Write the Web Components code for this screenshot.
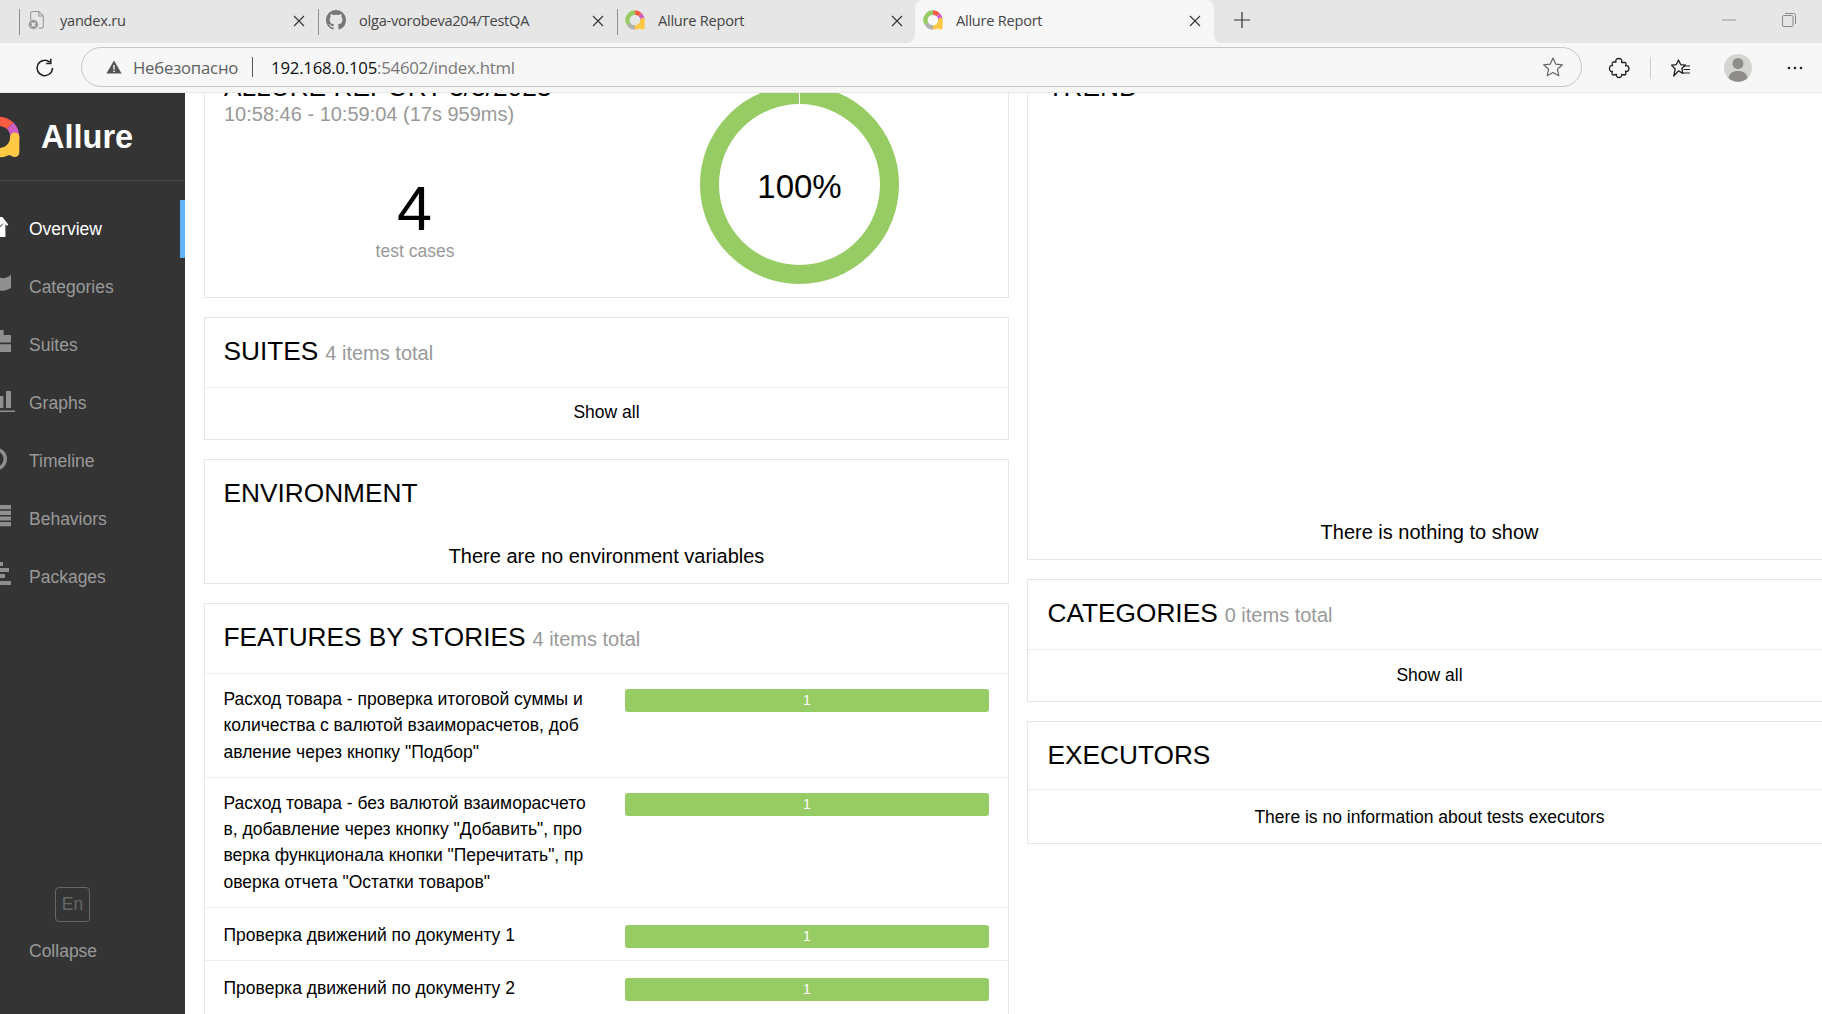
<!DOCTYPE html>
<html>
<head>
<meta charset="utf-8">
<title>Allure Report</title>
<style>
  html, body { margin: 0; height: 100%; overflow: hidden; background: #fff; }
  body { font-family: "Liberation Sans", Arial, sans-serif; }
</style>
</head>
<body>
<app-shell>
  <browser-tabs slot="tabs"></browser-tabs>
  <browser-toolbar slot="toolbar"></browser-toolbar>
  <side-nav slot="nav"></side-nav>
  <report-view slot="main"></report-view>
</app-shell>

<script>
const ALLURE_ICON = `
  <svg viewBox="0 0 32 32" width="100%" height="100%" fill="none" stroke-width="7" style="display:block">
    <path d="M16 4A12 12 0 0 1 24.5 7.5" stroke="#fb5c42"/>
    <path d="M24.5 7.5A12 12 0 0 1 28 16" stroke="#cf5cc4"/>
    <path d="M28 16A12 12 0 0 1 16 28" stroke="#ffc845"/>
    <path d="M28 16V27.8" stroke="#ffc845" stroke-linecap="round"/>
    <path d="M28 25L20 26.5L24 30H28Z" fill="#ffc845" stroke="none"/>
    <path d="M16 28A12 12 0 0 1 5.6 22" stroke="#b1b1ad"/>
    <path d="M5.6 22A12 12 0 0 1 16 4" stroke="#97cc64"/>
  </svg>`;

class AppShell extends HTMLElement {
  constructor() {
    super();
    this.attachShadow({ mode: 'open' });
    this.shadowRoot.innerHTML = `
      <style>
        :host { display: flex; flex-direction: column; width: 1822px; height: 1014px; overflow: hidden; }
        .page { display: flex; flex: 1; min-height: 0; overflow: hidden; }
      </style>
      <slot name="tabs"></slot>
      <slot name="toolbar"></slot>
      <div class="page">
        <slot name="nav"></slot>
        <slot name="main"></slot>
      </div>
    `;
  }
}

class BrowserTabs extends HTMLElement {
  constructor() {
    super();
    this.attachShadow({ mode: 'open' });
    const tab = (title, icon, active) => `
      <div class="tab ${active ? 'active' : ''}">
        <span class="ico">${icon}</span>
        <span class="name">${title}</span>
        <svg class="close" width="12" height="12" viewBox="0 0 12 12"><path d="M1 1L11 11M11 1L1 11" stroke="#333" stroke-width="1.1"/></svg>
      </div>`;
    const fileIcon = `<svg viewBox="0 0 20 22" width="18" height="20" fill="none"><path d="M6 1.5H12L17 6.5V18A2 2 0 0 1 15 20H12M3 11V3.5A2 2 0 0 1 5 1.5H6M12 1.5V6.5H17" stroke="#9a9a9a" stroke-width="1.2"/><circle cx="6" cy="16" r="5.2" fill="#9a9a9a"/><path d="M4 14L8 18M8 14L4 18" stroke="#fff" stroke-width="1.2"/></svg>`;
    const ghIcon = `<svg viewBox="0 0 16 16" width="20" height="20" fill="#777"><path d="M8 0C3.58 0 0 3.58 0 8c0 3.54 2.29 6.53 5.47 7.59.4.07.55-.17.55-.38 0-.19-.01-.82-.01-1.49-2.01.37-2.53-.49-2.69-.94-.09-.23-.48-.94-.82-1.13-.28-.15-.68-.52-.01-.53.63-.01 1.08.58 1.23.82.72 1.21 1.87.87 2.33.66.07-.52.28-.87.51-1.07-1.78-.2-3.64-.89-3.64-3.95 0-.87.31-1.59.82-2.15-.08-.2-.36-1.02.08-2.12 0 0 .67-.21 2.2.82.64-.18 1.32-.27 2-.27s1.36.09 2 .27c1.53-1.04 2.2-.82 2.2-.82.44 1.1.16 1.92.08 2.12.51.56.82 1.27.82 2.15 0 3.07-1.87 3.75-3.65 3.95.29.25.54.73.54 1.48 0 1.07-.01 1.93-.01 2.2 0 .21.15.46.55.38A8.01 8.01 0 0 0 16 8c0-4.42-3.58-8-8-8z"/></svg>`;
    this.shadowRoot.innerHTML = `
      <style>
        :host { display: flex; height: 43px; background: #e6e6e6; padding-left: 19px; box-sizing: border-box; font-family: "Open Sans", "Noto Sans", sans-serif; font-size: 14.6px; color: #444; flex: none; }
        .tab { width: 299px; box-sizing: border-box; display: flex; align-items: center; padding: 0 13px 3px 8px; position: relative; }
        .tab::before { content: ""; position: absolute; left: 0; top: 9px; height: 26px; width: 1px; background: #8f8f8f; }
        .tab.active { background: #f7f7f7; border-radius: 8px 8px 0 0; margin-left: -1px; }
        /* flared bottom corners of the active tab */
        .tab.active::before, .tab.active::after { content: ""; position: absolute; top: auto; bottom: 0; width: 8px; height: 8px; }
        .tab.active::before { left: -8px; background: radial-gradient(circle at 0 0, #e6e6e6 7.6px, #f7f7f7 8.4px); }
        .tab.active::after { right: -8px; background: radial-gradient(circle at 100% 0, #e6e6e6 7.6px, #f7f7f7 8.4px); }
        .ico { width: 20px; height: 20px; display: flex; align-items: center; justify-content: center; flex: none; }
        .name { flex: 1; padding-left: 13px; white-space: nowrap; letter-spacing: -.25px; }
        .close { flex: none; margin-top: 2px; }
        .plus { margin-left: 19px; align-self: center; margin-bottom: 3px; }
        .win { margin-left: auto; display: flex; gap: 46px; padding-right: 26px; align-items: center; margin-bottom: 3px; }
      </style>
      ${tab('yandex.ru', fileIcon)}
      ${tab('olga-vorobeva204/TestQA', ghIcon)}
      ${tab('Allure Report', ALLURE_ICON)}
      ${tab('Allure Report', ALLURE_ICON, true)}
      <svg class="plus" width="18" height="18" viewBox="0 0 18 18"><path d="M9 1V17M1 9H17" stroke="#333" stroke-width="1.2"/></svg>
      <div class="win">
        <svg width="14" height="14" viewBox="0 0 14 14"><path d="M0 7H14" stroke="#999" stroke-width="1"/></svg>
        <svg width="14" height="14" viewBox="0 0 14 14" fill="none"><rect x=".5" y="2.5" width="10.5" height="11" rx="1.5" stroke="#888"/><path d="M3 .5H11.5A2 2 0 0 1 13.5 2.5V11" stroke="#888"/></svg>
      </div>
    `;
  }
}

class BrowserToolbar extends HTMLElement {
  constructor() {
    super();
    this.attachShadow({ mode: 'open' });
    this.shadowRoot.innerHTML = `
      <style>
        :host { display: flex; align-items: center; height: 50px; background: #f7f7f7; border-bottom: 1px solid #e8e8e8; box-sizing: border-box; flex: none; font-family: "Open Sans", "Noto Sans", sans-serif; }
        .reload { width: 81px; display: flex; justify-content: center; padding-left: 9px; box-sizing: border-box; }
        .pill { width: 1501px; height: 40px; margin-top: -1px; box-sizing: border-box; border: 1px solid #c6c6c6; border-radius: 20px; display: flex; align-items: center; padding: 0 17px 0 24px; }
        .warn { flex: none; margin-right: 11px; }
        .unsafe { font-size: 16.7px; color: #606060; letter-spacing: -.2px; }
        .sep { width: 1px; height: 20px; background: #555; margin: 0 18px 0 14px; }
        .url { font-size: 16.8px; color: #777; flex: 1; letter-spacing: -.25px; }
        .url b { font-weight: 400; color: #111; }
        .tools { display: flex; align-items: center; }
        .tools > * { flex: none; display: block; }
        .vsep { width: 1px; height: 22px; background: #ccc; }
      </style>
      <div class="reload">
        <svg width="22" height="22" viewBox="0 0 22 22" fill="none"><path d="M18.5 11A7.7 7.7 0 1 1 15.8 5.1" stroke="#222" stroke-width="1.5"/><path d="M16.8 1.8V6.4H12.2" stroke="#222" stroke-width="1.5"/></svg>
      </div>
      <div class="pill">
        <svg class="warn" width="16" height="14" viewBox="0 0 16 14"><path d="M8 0.5L15.6 13.5H.4Z" fill="#555"/><path d="M8 5V9.4M8 10.5V12" stroke="#f7f7f7" stroke-width="1.4"/></svg>
        <span class="unsafe">Небезопасно</span>
        <span class="sep"></span>
        <span class="url"><b>192.168.0.105</b>:54602/index.html</span>
        <svg width="22" height="22" viewBox="0 0 22 22" fill="none"><path d="M11 2L13.7 8.1L20.4 8.8L15.4 13.2L16.8 19.7L11 16.4L5.2 19.7L6.6 13.2L1.6 8.8L8.3 8.1Z" stroke="#666" stroke-width="1.2" stroke-linejoin="round"/></svg>
      </div>
      <div class="tools">
        <svg style="margin-left:26px" width="22" height="22" viewBox="0 0 22 22" fill="none"><path d="M8 5C7 2.5 9 1.5 11 1.5S14.5 3 13.5 5.5L17 5.5C18.5 5.5 18 8 17.5 9C19.5 8 21 9.5 21 11.5S19.5 15 17.5 14C18 15.5 18.5 17 17 18L13.5 17.5C14 19.5 12.5 20.5 11 20.5S8 19.5 8.5 17.5L5 18C3.5 17.5 4 15.5 4.5 14.5C2.5 15 1.5 13.5 1.5 11.5S2.5 8 4.5 8.5C4 7 3.5 5.5 5 5Z" stroke="#222" stroke-width="1.3" stroke-linejoin="round"/></svg>
        <span class="vsep" style="margin-left:20px"></span>
        <svg style="margin-left:19px" width="22" height="22" viewBox="0 0 22 22" fill="none"><path d="M8.5 3L10.6 7.6L15.5 8.1L11.8 11.4L12.9 16.4L8.5 13.9L3.8 19L5.2 12L1.5 8.1L6.4 7.6Z" stroke="#222" stroke-width="1.3" stroke-linejoin="round"/><path d="M13 9H20M13.5 12.5H20M13 16H20" stroke="#222" stroke-width="1.2"/></svg>
        <svg style="margin-left:32px" width="28" height="30" viewBox="0 0 28 30"><circle cx="14" cy="15" r="14" fill="#d4d4d0"/><circle cx="14" cy="10.5" r="5.5" fill="#8f8d89"/><path d="M4.5 25C5.5 19 10 18 14 18S22.5 19 23.5 25A14 14 0 0 1 4.5 25Z" fill="#8f8d89"/></svg>
        <svg style="margin-left:35px" width="16" height="4" viewBox="0 0 16 4" fill="#222"><circle cx="2" cy="2" r="1.3"/><circle cx="8" cy="2" r="1.3"/><circle cx="14" cy="2" r="1.3"/></svg>
      </div>
    `;
  }
}

class NavItem extends HTMLElement {
  constructor() {
    super();
    this.attachShadow({ mode: 'open' });
    this.shadowRoot.innerHTML = `
      <style>
        :host { display: flex; align-items: center; height: 58px; position: relative; color: #999; font-size: 17.5px; box-sizing: border-box; }
        :host([active]) { color: #fff; }
        :host([active])::after { content: ""; position: absolute; right: 0; top: 0; bottom: 0; width: 5px; background: #5cb3f7; }
        .icon { width: 29px; flex: none; display: flex; }
      </style>
      <span class="icon"><slot name="icon"></slot></span>
      <slot></slot>
    `;
  }
}

class SideNav extends HTMLElement {
  constructor() {
    super();
    this.attachShadow({ mode: 'open' });
    const item = (label, icon, active) => `<nav-item ${active ? 'active' : ''}><svg slot="icon" width="16" height="32" viewBox="0 0 16 32" style="display:block">${icon}</svg>${label}</nav-item>`;
    this.shadowRoot.innerHTML = `
      <style>
        :host { display: flex; flex-direction: column; width: 185px; flex: none; background: #343434; }
        .brand { height: 88px; box-sizing: border-box; border-bottom: 1px solid #4a4a4a; display: flex; align-items: center; padding-top: 2px; color: #fff; font-weight: 700; font-size: 32.5px; overflow: hidden; }
        .logo { flex: none; width: 42px; height: 42px; margin: -2px 21px 0 -22px; }
        .menu { padding-top: 19px; flex: 1; }
        .lang { margin: 0 0 0 55px; width: 35px; height: 35px; box-sizing: border-box; border: 1px solid #666; border-radius: 4px; color: #666; display: flex; align-items: center; justify-content: center; font-size: 17.5px; }
        .collapse { color: #999; font-size: 17.5px; padding: 18px 0 52px 29px; line-height: 22px; }
      </style>
      <div class="brand"><span class="logo">${ALLURE_ICON}</span>Allure</div>
      <div class="menu">
        ${item('Overview', '<path d="M0 4H2.4L8.2 11.4L7 13L5.4 11V24H0Z" fill="#fff"/><path d="M0 14L3 10.6" stroke="#343434" stroke-width="1"/>', true)}
        ${item('Categories', '<path d="M0 6.5Q5 9 11 4V17Q6 20 2 20Q0 20 0 19Z" fill="#8f8f8f"/>')}
        ${item('Suites', '<path d="M0 1H3.6V6H11V13.6H0ZM0 15.2H11V23H0Z" fill="#8f8f8f"/>')}
        ${item('Graphs', '<path d="M0 9H3.4V21H0ZM6 4H11V21H6ZM0 23.4H15V25H0Z" fill="#8f8f8f"/>')}
        ${item('Timeline', '<circle cx="-4.5" cy="14" r="9.8" fill="none" stroke="#8f8f8f" stroke-width="3.4"/>')}
        ${item('Behaviors', '<path d="M0 2H11V6.2H0ZM0 7.7H11V11.9H0ZM0 13.4H11V17.6H0ZM0 19.1H11V23.3H0Z" fill="#8f8f8f"/>')}
        ${item('Packages', '<path d="M0 1H3V5H0ZM0 7H9V11H0ZM0 13H5V17H0ZM0 20H11V24H0Z" fill="#8f8f8f"/>')}
      </div>
      <div class="lang">En</div>
      <div class="collapse">Collapse</div>
    `;
  }
}

class PlainCard extends HTMLElement {
  constructor() {
    super();
    this.attachShadow({ mode: 'open' });
    this.shadowRoot.innerHTML = `
      <style>
        :host { display: block; background: #fff; border: 1px solid #e6e6e6; box-sizing: border-box; margin-bottom: 19px; }
      </style>
      <slot></slot>
    `;
  }
}

class ReportWidget extends HTMLElement {
  constructor() {
    super();
    this.attachShadow({ mode: 'open' });
    this.shadowRoot.innerHTML = `
      <style>
        :host { display: block; background: #fff; border: 1px solid #e6e6e6; box-sizing: border-box; margin-bottom: 19px; font-size: 17.5px; color: #000; }
        .head { padding: 17px 0 18px var(--pad, 19px); font-size: 26.25px; line-height: 32px; display: flex; align-items: baseline; gap: 7px; white-space: nowrap; }
        .head small { font-size: 20px; color: #999; }
      </style>
      <div class="head"><span><slot name="title"></slot></span><small><slot name="count"></slot></small></div>
      <slot></slot>
    `;
  }
}

class ShowAll extends HTMLElement {
  constructor() {
    super();
    this.attachShadow({ mode: 'open' });
    this.shadowRoot.innerHTML = `
      <style>
        :host { display: block; border-top: 1px solid #eee; text-align: center; font-size: 17.5px; line-height: 22px; padding: 13px 0 16px; }
      </style>
      <slot></slot>
    `;
  }
}

class FeatureRow extends HTMLElement {
  constructor() {
    super();
    this.attachShadow({ mode: 'open' });
    this.shadowRoot.innerHTML = `
      <style>
        :host { display: grid; grid-template-columns: 401.5px 364px; box-sizing: border-box; border-top: 1px solid #eee; padding: 12px 0 12px var(--pad, 19px); font-size: 17.5px; line-height: 26.25px; }
        :host([single]) { min-height: 53.5px; padding-top: 14px; }
        .name { word-break: break-all; width: 364px; }
        .bar { height: 23px; margin-top: 3px; background: #97cc64; border-radius: 3px; color: #fff; font-size: 14px; line-height: 22px; text-align: center; }
      </style>
      <div class="name"><slot></slot></div>
      <div class="bar">1</div>
    `;
  }
}

class ReportView extends HTMLElement {
  constructor() {
    super();
    this.attachShadow({ mode: 'open' });
    this.shadowRoot.innerHTML = `
      <style>
        :host { display: block; flex: 1; min-width: 0; overflow: hidden; }
        .grid { display: grid; grid-template-columns: 805px 805px; column-gap: 18px; padding-left: 19px; margin-top: -33px; align-items: start; }
        .left { --pad: 18.5px; }
        .right { --pad: 19.5px; }
        .right show-all { padding: 14px 0 15px; }
        .summary { display: grid; grid-template-columns: 383px 1fr; height: 236px; box-sizing: border-box; padding: 0 19px; }
        .title { font-size: 26.25px; line-height: 30px; padding-top: 11px; white-space: nowrap; }
        .date { font-size: 20px; line-height: 24px; color: #999; white-space: nowrap; }
        .big { font-size: 63px; line-height: 63px; text-align: center; margin-top: 51px; margin-left: -2px; }
        .sub { font-size: 17.5px; line-height: 24px; color: #999; text-align: center; margin-top: -1px; margin-left: -1px; }
        .donut { position: relative; width: 199px; height: 199px; margin: 24px 0 0 93px; }
        .donut svg { display: block; }
        .donut span { position: absolute; inset: 0; display: flex; align-items: center; justify-content: center; font-size: 33px; padding-top: 5px; box-sizing: border-box; }
        .trend-title { font-size: 26.25px; line-height: 30px; padding: 11px var(--pad) 0; }
        .none { font-size: 20px; line-height: 24px; text-align: center; }
        .trend { height: 498px; box-sizing: border-box; display: flex; flex-direction: column; justify-content: space-between; padding-bottom: 15px; }
        .env-text { padding: 17px 0 15px; }
        .exec { border-top: 1px solid #eee; text-align: center; line-height: 22px; padding: 16px 0 15px; }
      </style>
      <div class="grid">
        <div class="left">
          <plain-card>
            <div class="summary">
              <div>
                <div class="title">ALLURE REPORT 3/3/2023</div>
                <div class="date">10:58:46 - 10:59:04 (17s 959ms)</div>
                <div class="big">4</div>
                <div class="sub">test cases</div>
              </div>
              <div class="donut">
                <svg width="199" height="199" viewBox="0 0 199 199"><circle cx="99.5" cy="99.5" r="90" fill="none" stroke="#97cc64" stroke-width="19"/><path d="M99.5 0V19" stroke="#fff" stroke-width="1"/></svg>
                <span>100%</span>
              </div>
            </div>
          </plain-card>
          <report-widget><span slot="title">SUITES</span><span slot="count">4 items total</span><show-all>Show all</show-all></report-widget>
          <report-widget><span slot="title">ENVIRONMENT</span><div class="none env-text">There are no environment variables</div></report-widget>
          <report-widget>
            <span slot="title">FEATURES BY STORIES</span><span slot="count">4 items total</span>
            <feature-row>Расход товара - проверка итоговой суммы и количества с валютой взаиморасчетов, добавление через кнопку "Подбор"</feature-row>
            <feature-row>Расход товара - без валютой взаиморасчетов, добавление через кнопку "Добавить", проверка функционала кнопки "Перечитать", проверка отчета "Остатки товаров"</feature-row>
            <feature-row single>Проверка движений по документу 1</feature-row>
            <feature-row single>Проверка движений по документу 2</feature-row>
          </report-widget>
        </div>
        <div class="right">
          <plain-card>
            <div class="trend">
              <div class="trend-title">TREND</div>
              <div class="none">There is nothing to show</div>
            </div>
          </plain-card>
          <report-widget><span slot="title">CATEGORIES</span><span slot="count">0 items total</span><show-all>Show all</show-all></report-widget>
          <report-widget><span slot="title">EXECUTORS</span><div class="exec">There is no information about tests executors</div></report-widget>
        </div>
      </div>
    `;
  }
}

customElements.define('app-shell', AppShell);
customElements.define('browser-tabs', BrowserTabs);
customElements.define('browser-toolbar', BrowserToolbar);
customElements.define('nav-item', NavItem);
customElements.define('side-nav', SideNav);
customElements.define('plain-card', PlainCard);
customElements.define('report-widget', ReportWidget);
customElements.define('show-all', ShowAll);
customElements.define('feature-row', FeatureRow);
customElements.define('report-view', ReportView);
</script>
</body>
</html>
